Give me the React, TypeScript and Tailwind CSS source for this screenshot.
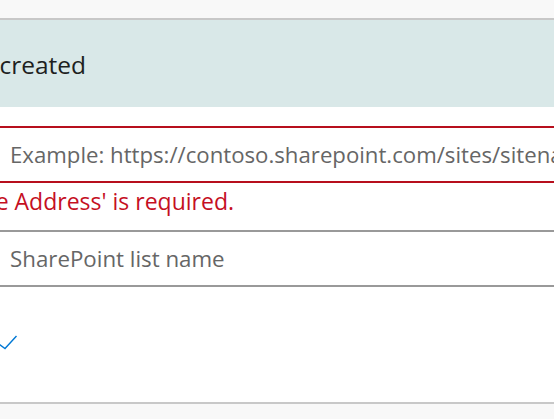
export default function App() {
  return (
    <div
      className="w-full h-[419px] overflow-hidden bg-white flex flex-col"
      style={{ fontFamily: '"Open Sans", "Noto Sans", sans-serif' }}
    >
      {/* top strip */}
      <div className="h-[20px] shrink-0 bg-[#f8f8f8] border-b-2 border-[#c8c8c8]" />

      {/* success banner */}
      <div className="h-[87px] shrink-0 bg-[#d9e8e8] flex items-center pt-[4px]">
        <div className="w-[86px] flex justify-end">
          <span className="whitespace-nowrap text-[24.5px] text-[#201f1e] leading-none">
            Your list has been created
          </span>
        </div>
      </div>

      <div className="h-[19px] shrink-0" />

      {/* site address input */}
      <div className="h-[57px] shrink-0 border-y-2 border-[#b70f1d] flex items-center px-[10px]">
        <span className="whitespace-nowrap text-[22.2px] text-[#666666]">
          Example: https://contoso.sharepoint.com/sites/sitename
        </span>
      </div>

      {/* error */}
      <div className="h-[47px] shrink-0 flex items-center pb-[11px]">
        <div className="w-[234px] flex justify-end">
          <span className="whitespace-nowrap text-[23px] text-[#c50f1f] leading-none">
            'Site Address' is required.
          </span>
        </div>
      </div>

      {/* list name input */}
      <div className="h-[57px] shrink-0 border-y-2 border-[#999999] flex items-center px-[10px]">
        <span className="whitespace-nowrap text-[22.3px] text-[#666666]">SharePoint list name</span>
      </div>

      {/* checkbox area */}
      <div className="h-[115px] shrink-0 flex items-center pb-[6px]">
        <svg width="22" height="18" viewBox="0 0 22 18" className="-ml-[4px]" fill="none">
          <path d="M0 9 L9 15.5 L20.5 3" stroke="#0078d4" strokeWidth="1.4" />
        </svg>
      </div>

      {/* footer */}
      <div className="flex-1 bg-[#f8f8f8] border-t-2 border-[#c8c8c8]" />
    </div>
  );
}
